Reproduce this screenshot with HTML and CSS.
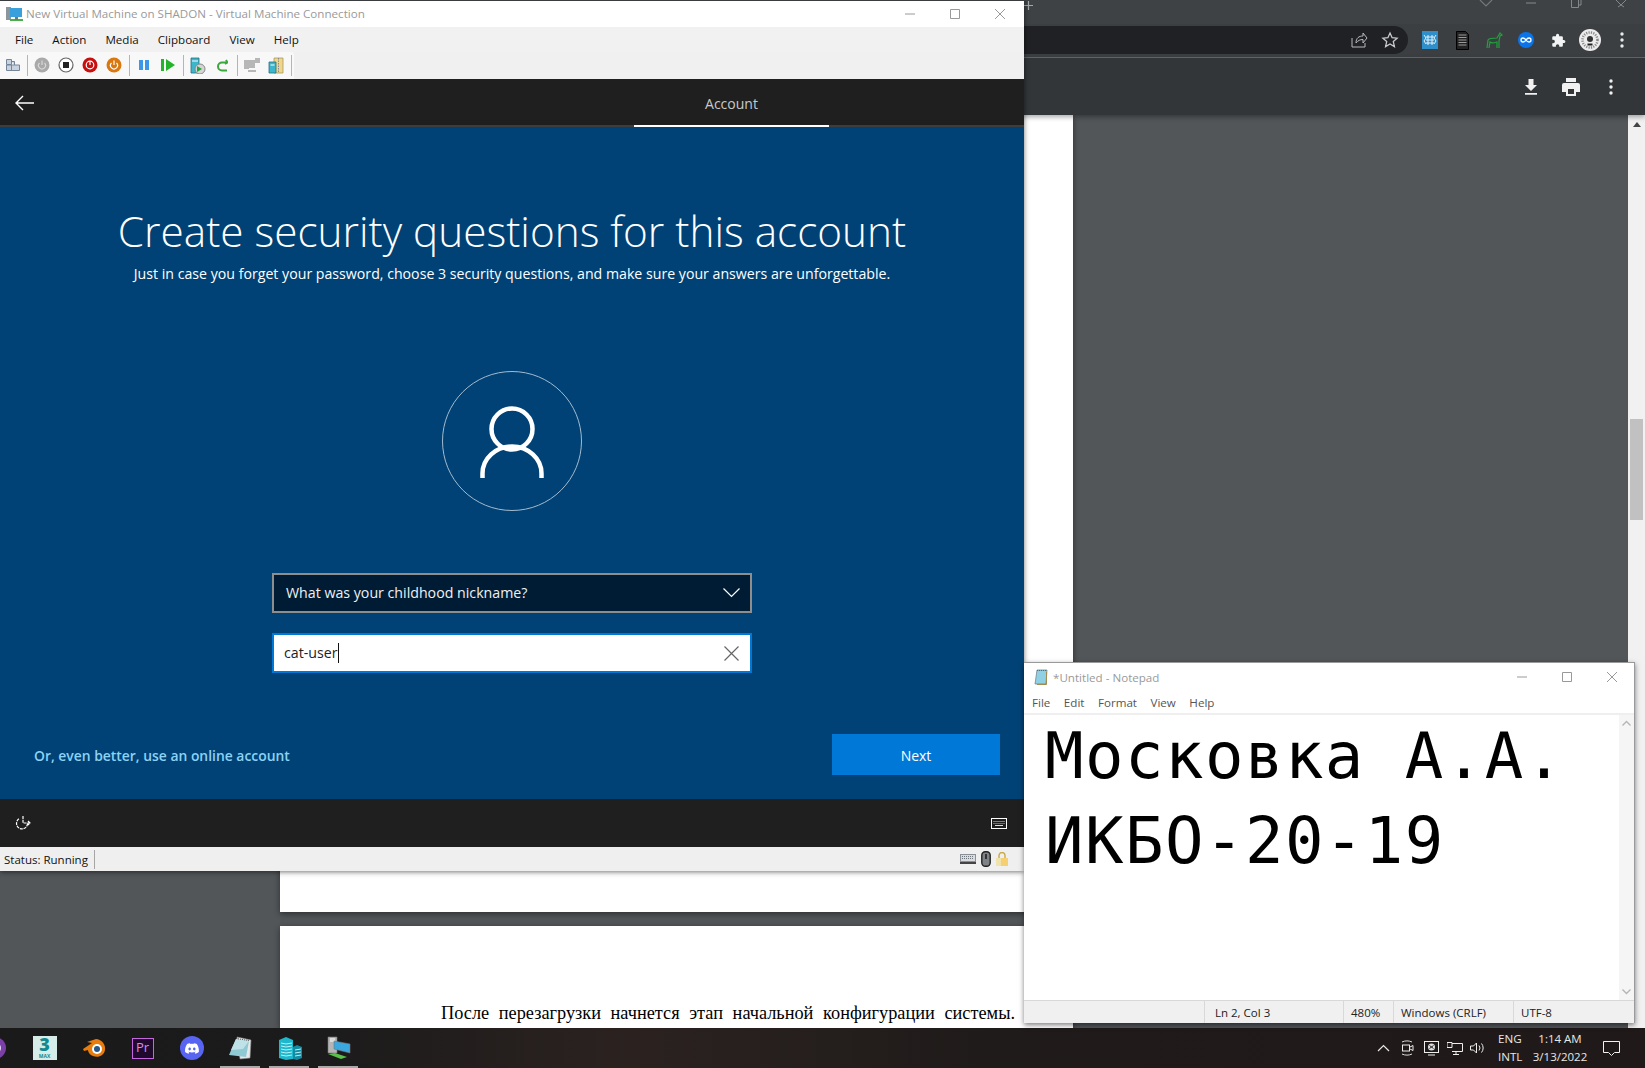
FILE: index.html
```html
<!DOCTYPE html>
<html lang="en">
<head>
<meta charset="utf-8">
<title>Virtual Machine Connection</title>
<link rel="stylesheet" href="styles.css">
</head>
<body>
<div class="desktop">

  <section class="chrome">
    <div class="chrome-tabs">
      <svg class="tab-plus" width="9" height="9" viewBox="0 0 9 9"><path d="M4.500 0v9M0 4.500h9" stroke="#a6a9ab" stroke-width="1.200"/></svg>
      <div class="chrome-caption">
        <svg width="14" height="8" viewBox="0 0 14 8"><path d="M1 0l6 6 6-6" fill="none" stroke="#74787b" stroke-width="1.200"/></svg>
        <svg width="14" height="8" viewBox="0 0 14 8"><path d="M2 3h10" stroke="#85898c" stroke-width="1"/></svg>
        <svg width="14" height="8" viewBox="0 0 14 8"><path d="M2.500 0v7.500h7V0M9.500 5H12V0" fill="none" stroke="#85898c" stroke-width="1"/></svg>
        <svg width="14" height="8" viewBox="0 0 14 8"><path d="M2 0l5 5 5-5M4 7l3-2 3 2" fill="none" stroke="#85898c" stroke-width="1"/></svg>
      </div>
    </div>
    <div class="chrome-bar">
      <div class="omnibox">
        <svg class="omni-icon" width="18" height="18" viewBox="0 0 18 18"><path d="M2 7v9h13v-4M6 12c0-5 3-7 7-7V2l4 5-4 5V8.500c-3 0-5 1-7 3.500z" fill="none" stroke="#b9bbbd" stroke-width="1"/></svg>
        <svg class="omni-icon" width="18" height="18" viewBox="0 0 18 18"><path d="M9 2l2.100 4.700 5 .5-3.800 3.400 1.100 5L9 13l-4.400 2.600 1.100-5L1.900 7.200l5-.5z" fill="none" stroke="#c9cbce" stroke-width="1.300"/></svg>
      </div>
      <div class="ext-row">
        <svg width="16" height="18" viewBox="0 0 16 18"><rect width="16" height="18" fill="#2f8fcb"/><path d="M2 4l2 3-2 3 2 3M6 4v10M10 4v10M14 4l-2 3 2 3-2 3M4 6h8M4 9h8M4 12h8" stroke="#e4f1fa" fill="none" stroke-width="1"/></svg>
        <svg width="13" height="19" viewBox="0 0 13 19"><path d="M.5.5h9l3 3v15H.5z" fill="#222" stroke="#000"/><path d="M2.500 4h8M2.500 6.500h8M2.500 9h8M2.500 11.500h8M2.500 14h8" stroke="#9a9a9a" stroke-width="1"/></svg>
        <svg width="17" height="18" viewBox="0 0 17 18"><path d="M1 17l1-8c1-2 6-2 9-2l3-5 2 2-2 1-1 5v7M11 17V11C8 12 5 12 4 11l-1 6" fill="none" stroke="#1fa33b" stroke-width="1.200"/></svg>
        <svg width="16" height="16" viewBox="0 0 16 16"><circle cx="8" cy="8" r="8" fill="#0a74ea"/><path d="M8 8c-1-1.500-2-2-3-2a2 2 0 0 0 0 4c1 0 2-.5 3-2s2-2 3-2a2 2 0 0 1 0 4c-1 0-2-.5-3-2z" fill="none" stroke="#fff" stroke-width="1.300"/></svg>
        <svg width="15" height="15" viewBox="0 0 24 24"><path d="M20.500 11H19V7a2 2 0 0 0-2-2h-4V3.500a2.500 2.500 0 0 0-5 0V5H4a2 2 0 0 0-2 2v3.800h1.500a2.700 2.700 0 0 1 0 5.400H2V20a2 2 0 0 0 2 2h3.800v-1.500a2.700 2.700 0 0 1 5.400 0V22H17a2 2 0 0 0 2-2v-4h1.500a2.500 2.500 0 0 0 0-5z" fill="#f1f3f4"/></svg>
        <svg width="22" height="22" viewBox="0 0 22 22"><circle cx="11" cy="11" r="11" fill="#ececec"/><circle cx="11" cy="11" r="7.500" fill="none" stroke="#888" stroke-width="2.500" stroke-dasharray="1.200 1.200"/><circle cx="11" cy="10" r="3" fill="#333"/><path d="M8.500 15.500h5" stroke="#222" stroke-width="2"/></svg>
        <svg width="4" height="16" viewBox="0 0 4 16"><circle cx="2" cy="2" r="1.700" fill="#e8eaed"/><circle cx="2" cy="8" r="1.700" fill="#e8eaed"/><circle cx="2" cy="14" r="1.700" fill="#e8eaed"/></svg>
      </div>
    </div>
    <div class="pdf-bar">
      <svg width="14" height="16" viewBox="0 0 14 16"><path d="M4.500 0h5v6H13L7 12 1 6h3.500zM1 14h12v1.800H1z" fill="#f1f1f1"/></svg>
      <svg width="18" height="18" viewBox="0 0 18 18"><path d="M4 0h10v4H4zM2 5h14a2 2 0 0 1 2 2v7h-4v4H4v-4H0V7a2 2 0 0 1 2-2z" fill="#f1f1f1"/><path d="M6 11h6v5H6z" fill="#323639"/></svg>
      <svg width="4" height="16" viewBox="0 0 4 16"><circle cx="2" cy="2" r="1.700" fill="#f1f1f1"/><circle cx="2" cy="8" r="1.700" fill="#f1f1f1"/><circle cx="2" cy="14" r="1.700" fill="#f1f1f1"/></svg>
    </div>
    <div class="pdf-view">
      <div class="pages">
        <div class="page page-first"></div>
        <div class="page page-second">
          <p class="page-line">После перезагрузки начнется этап начальной конфигурации системы.</p>
        </div>
      </div>
      <div class="scroll">
        <svg width="8" height="5" viewBox="0 0 8 5"><path d="M4 0l4 5H0z" fill="#444"/></svg>
        <div class="scroll-thumb"></div>
      </div>
    </div>
  </section>

  <section class="vm">
    <header class="win-title">
      <svg width="17" height="17" viewBox="0 0 17 17"><rect y="1" width="5" height="13" fill="#8d959c"/><rect x="4" y="2" width="12" height="9" fill="#3aa0dc"/><path d="M4 13h13v2H4z" fill="#48b04a"/><path d="M9 11h3v3H9z" fill="#777"/></svg>
      <span class="win-name">New Virtual Machine on SHADON - Virtual Machine Connection</span>
      <div class="caption">
        <svg width="12" height="12" viewBox="0 0 12 12"><path d="M1 6h10" stroke="#999" stroke-width="1"/></svg>
        <svg width="12" height="12" viewBox="0 0 12 12"><path d="M1.500 1.500h9v9h-9z" fill="none" stroke="#999" stroke-width="1"/></svg>
        <svg width="12" height="12" viewBox="0 0 12 12"><path d="M1 1l10 10M11 1L1 11" stroke="#999" stroke-width="1"/></svg>
      </div>
    </header>
    <nav class="menu vm-menu">
      <span>File</span><span>Action</span><span>Media</span><span>Clipboard</span><span>View</span><span>Help</span>
    </nav>
    <div class="toolbar">
      <div class="tb-group">
        <span class="tb tb-first"><svg width="16" height="14" viewBox="0 0 16 14"><path d="M1.500 1.500h5v5h-5zM1.500 7h13v5.500h-13zM6.500 7v5.500M6.500 3.500h3V7" fill="#c9d3e0" stroke="#76869a"/></svg></span>
        <i class="tb-sep"></i>
        <span class="tb"><svg width="16" height="16" viewBox="0 0 16 16"><circle cx="8" cy="8" r="7.500" fill="#a9a9a9"/><path d="M5.500 6a3.500 3.500 0 1 0 5 0M8 3.500V8" fill="none" stroke="#d8d8d8" stroke-width="1.200"/></svg></span>
        <span class="tb"><svg width="16" height="16" viewBox="0 0 16 16"><circle cx="8" cy="8" r="7" fill="#fff" stroke="#666" stroke-width="1.200"/><rect x="5" y="5" width="6" height="6" fill="#222"/></svg></span>
        <span class="tb"><svg width="16" height="16" viewBox="0 0 16 16"><circle cx="8" cy="8" r="7.500" fill="#c80f0f"/><circle cx="8" cy="8" r="3.800" fill="none" stroke="#fff" stroke-width="1.200"/><path d="M8 4v4" stroke="#fff" stroke-width="1.200"/></svg></span>
        <span class="tb"><svg width="16" height="16" viewBox="0 0 16 16"><circle cx="8" cy="8" r="7.500" fill="#d9780f"/><path d="M5.500 6a3.500 3.500 0 1 0 5 0M8 3.500V8" fill="none" stroke="#fff" stroke-width="1.200"/></svg></span>
        <i class="tb-sep"></i>
        <span class="tb"><svg width="12" height="12" viewBox="0 0 12 12"><path d="M1 1h4v10H1zM7 1h4v10H7z" fill="#3c97e8"/></svg></span>
        <span class="tb"><svg width="14" height="12" viewBox="0 0 14 12"><path d="M0 0h3v12H0zM5 0l9 6-9 6z" fill="#22b52b"/></svg></span>
        <i class="tb-sep"></i>
        <span class="tb"><svg width="16" height="17" viewBox="0 0 16 17"><path d="M1 1h8v15H1z" fill="#3db5cc" stroke="#28707f" stroke-width=".800"/><path d="M2 4h6" stroke="#fff"/><circle cx="10" cy="12" r="5" fill="#d5d5d5" stroke="#888"/><path d="M7 9l5 3-5 3z" fill="#21a63a"/></svg></span>
        <span class="tb"><svg width="12" height="13" viewBox="0 0 12 13"><path d="M10 1l1.500 2.500L9 5M11 3.500H6a3.500 3.500 0 0 0 0 8h5" fill="none" stroke="#3aa83a" stroke-width="2"/></svg></span>
        <i class="tb-sep"></i>
        <span class="tb"><svg width="16" height="15" viewBox="0 0 16 15"><path d="M0 2h5v9H0zM5 2h6v8H5zM11 0h5v5h-5zM4 12h8v2H4z" fill="#b7b7b7"/></svg></span>
        <span class="tb"><svg width="16" height="17" viewBox="0 0 16 17"><path d="M6 1h9v15H6z" fill="#efd68a" stroke="#a99960" stroke-width=".800"/><path d="M10.500 1v15" stroke="#888" stroke-dasharray="1.500 1"/><path d="M1 5h7v11H1z" fill="#3db5cc" stroke="#28707f" stroke-width=".800"/><path d="M2.500 8h4" stroke="#fff"/></svg></span>
        <i class="tb-sep"></i>
      </div>
    </div>

    <div class="oobe-head">
      <button class="oobe-back" type="button" aria-label="Back"><svg width="19" height="16" viewBox="0 0 19 16"><path d="M8 1L1 8l7 7M1 8h18" fill="none" stroke="#fff" stroke-width="1.400"/></svg></button>
      <div class="oobe-tab">Account</div>
    </div>

    <main class="oobe">
      <h1 class="oobe-title">Create security questions for this account</h1>
      <p class="oobe-sub">Just in case you forget your password, choose 3 security questions, and make sure your answers are unforgettable.</p>
      <div class="avatar">
        <svg width="64" height="72" viewBox="0 0 64 72"><circle cx="32" cy="23" r="20.500" fill="none" stroke="#fff" stroke-width="4.500"/><path d="M2.500 72v-4.500a29.500 27 0 0 1 59 0V72" fill="none" stroke="#fff" stroke-width="4.500"/></svg>
      </div>
      <div class="select">
        <span class="select-text">What was your childhood nickname?</span>
        <svg width="17" height="10" viewBox="0 0 17 10"><path d="M.500.500l8 8 8-8" fill="none" stroke="#fff" stroke-width="1.200"/></svg>
      </div>
      <div class="field">
        <span class="field-value">cat-user</span>
        <svg width="15" height="15" viewBox="0 0 15 15"><path d="M.500.500l14 14M14.500.500l-14 14" stroke="#666" stroke-width="1.200"/></svg>
      </div>
      <div class="oobe-actions">
        <a class="oobe-link">Or, even better, use an online account</a>
        <button class="oobe-next" type="button">Next</button>
      </div>
    </main>

    <div class="oobe-foot">
      <svg width="16" height="16" viewBox="0 0 16 16"><path d="M12.500 8.500a5.500 5.500 0 1 1-8-5M8 1v7h7M13 6l2 2-2 2" fill="none" stroke="#fff" stroke-width="1.200" stroke-dasharray="3 .8"/></svg>
      <svg width="16" height="11" viewBox="0 0 16 11"><rect x=".5" y=".5" width="15" height="10" fill="#1f1f1f" stroke="#fff"/><path d="M2.500 3.500h11" stroke="#ddd" stroke-dasharray="1 1"/><path d="M2.500 5.500h11" stroke="#e6a0e6" stroke-dasharray="1 1"/><path d="M4 7.500h8" stroke="#ddd"/></svg>
    </div>

    <footer class="vm-status">
      <span class="vm-status-text">Status: Running</span>
      <div class="vm-status-icons">
        <svg width="16" height="10" viewBox="0 0 16 10"><rect x=".5" y=".5" width="15" height="7" fill="#d8dce0" stroke="#8a9097"/><path d="M2 2.500h12M2 4.500h12" stroke="#70757c" stroke-dasharray="1 1"/><path d="M0 9h16" stroke="#444" stroke-width="2"/></svg>
        <svg width="10" height="16" viewBox="0 0 10 16"><rect x=".8" y=".8" width="8.400" height="14.400" rx="3.500" fill="#7e8388" stroke="#222" stroke-width="1.400"/><path d="M5 3v5" stroke="#333" stroke-width="2"/></svg>
        <svg width="12" height="14" viewBox="0 0 12 14"><path d="M3 6V3.500a3 3 0 0 1 6 0V6" fill="none" stroke="#c9a94a" stroke-width="1.400"/><rect y="6" width="12" height="8" fill="#f5cf70"/><rect width="5" height="8" y="6" fill="#f0e2ad"/></svg>
      </div>
    </footer>
  </section>

  <section class="notepad">
    <header class="win-title np-title">
      <svg width="16" height="16" viewBox="0 0 16 16"><path d="M3 1h10l-1 14H1z" fill="#8fd0e4" stroke="#6b7a80" stroke-width=".700"/><path d="M12.500 3v12.500H3" fill="none" stroke="#a28b50"/><path d="M3 1.500h10" stroke="#666" stroke-dasharray="1 1"/></svg>
      <span class="win-name np-name">*Untitled - Notepad</span>
      <div class="caption np-caption">
        <svg width="12" height="12" viewBox="0 0 12 12"><path d="M1 6h10" stroke="#999" stroke-width="1"/></svg>
        <svg width="12" height="12" viewBox="0 0 12 12"><path d="M1.500 1.500h9v9h-9z" fill="none" stroke="#999" stroke-width="1"/></svg>
        <svg width="12" height="12" viewBox="0 0 12 12"><path d="M1 1l10 10M11 1L1 11" stroke="#999" stroke-width="1"/></svg>
      </div>
    </header>
    <nav class="menu np-menu">
      <span>File</span><span>Edit</span><span>Format</span><span>View</span><span>Help</span>
    </nav>
    <div class="np-body">
      <div class="np-text">Московка А.А.<br>ИКБО-20-19</div>
      <div class="np-scroll">
        <svg width="9" height="6" viewBox="0 0 9 6"><path d="M.5 5.500l4-4 4 4" fill="none" stroke="#b5b5b5" stroke-width="1.400"/></svg>
        <svg width="9" height="6" viewBox="0 0 9 6"><path d="M.5.500l4 4 4-4" fill="none" stroke="#b5b5b5" stroke-width="1.400"/></svg>
      </div>
    </div>
    <footer class="np-status">
      <span class="cell cell-pad"></span>
      <span class="cell cell-pos">Ln 2, Col 3</span>
      <span class="cell cell-zoom">480%</span>
      <span class="cell cell-eol">Windows (CRLF)</span>
      <span class="cell cell-enc">UTF-8</span>
    </footer>
  </section>

  <footer class="taskbar">
    <div class="task-icons">
      <span class="task task-cut"><svg width="7" height="24" viewBox="0 0 7 24"><circle cx="-5" cy="12" r="11" fill="#7b3fa8"/><circle cx="-5" cy="12" r="5" fill="none" stroke="#e6d5f0" stroke-width="2"/></svg></span>
      <span class="task"><span class="max-logo"><b>3</b><small>MAX</small></span></span>
      <span class="task"><svg width="24" height="20" viewBox="0 0 24 20"><path d="M1 11l9-6-5-1 9-3c5 0 10 5 9 11s-7 8-12 6-5-6-5-6l-4 1z" fill="#e87d0d"/><circle cx="15" cy="11" r="5" fill="#fff"/><circle cx="15" cy="11" r="3" fill="#265787"/></svg></span>
      <span class="task"><span class="pr-logo">Pr</span></span>
      <span class="task"><svg width="24" height="24" viewBox="0 0 24 24"><circle cx="12" cy="12" r="12" fill="#5865f2"/><g transform="translate(5 5.500) scale(.58)"><path fill="#fff" d="M20.317 4.37a19.791 19.791 0 0 0-4.885-1.515.074.074 0 0 0-.079.037c-.21.375-.444.864-.608 1.25a18.27 18.27 0 0 0-5.487 0 12.64 12.64 0 0 0-.617-1.25.077.077 0 0 0-.079-.037A19.736 19.736 0 0 0 3.677 4.37a.07.07 0 0 0-.032.027C.533 9.046-.32 13.58.099 18.057a.082.082 0 0 0 .031.057 19.9 19.9 0 0 0 5.993 3.03.078.078 0 0 0 .084-.028c.462-.63.874-1.295 1.226-1.994a.076.076 0 0 0-.041-.106 13.107 13.107 0 0 1-1.872-.892.077.077 0 0 1-.008-.128 10.2 10.2 0 0 0 .372-.292.074.074 0 0 1 .077-.01c3.928 1.793 8.18 1.793 12.062 0a.074.074 0 0 1 .078.01c.12.098.246.198.373.292a.077.077 0 0 1-.006.127 12.299 12.299 0 0 1-1.873.892.077.077 0 0 0-.041.107c.36.698.772 1.362 1.225 1.993a.076.076 0 0 0 .084.028 19.839 19.839 0 0 0 6.002-3.03.077.077 0 0 0 .032-.054c.5-5.177-.838-9.674-3.549-13.66a.061.061 0 0 0-.031-.03zM8.020 15.330c-1.183 0-2.157-1.085-2.157-2.419 0-1.333.956-2.419 2.157-2.419 1.21 0 2.176 1.096 2.157 2.420 0 1.333-.956 2.418-2.157 2.418zm7.975 0c-1.183 0-2.157-1.085-2.157-2.419 0-1.333.955-2.419 2.157-2.419 1.21 0 2.176 1.096 2.157 2.420 0 1.333-.946 2.418-2.157 2.418z"/></g></svg></span>
      <span class="task task-open"><svg width="24" height="24" viewBox="0 0 24 24"><path d="M8 1l14 3-1 18-10 1z" fill="#e8e8e8" stroke="#8a8a8a" stroke-width=".6"/><path d="M7 3l13 2-3 16L0 19z" fill="#8fc9d4"/><path d="M7 3l13 2-6 8L2 14z" fill="#bfe2e8"/><path d="M7 2.500l13 2" stroke="#555" stroke-dasharray="1 1"/></svg></span>
      <span class="task task-open"><svg width="24" height="24" viewBox="0 0 24 24"><path d="M1 4l7-3 7 3v19l-7 1-7-2z" fill="#1fb7cc"/><path d="M15 11l4-2 5 2v11l-5 2-4-1z" fill="#128ba3"/><path d="M3 7l5 1M3 10l5 1M3 13l5 1M3 16l5 1M3 19l5 1M8 8l6-1M8 11l6-1M8 14l6-1M8 17l6-1M8 20l6-1M17 14l6-1M17 17l6-1M17 20l6-1" stroke="#b7f2fa" fill="none"/></svg></span>
      <span class="task task-open"><svg width="24" height="24" viewBox="0 0 24 24"><path d="M1 1h9v16H1z" fill="#b5b5b5" stroke="#777" stroke-width=".6"/><path d="M3 3h5M3 5h5" stroke="#fff"/><path d="M7 5l16 3v9L7 13z" fill="#3ba9e0" stroke="#777" stroke-width=".6"/><path d="M1 18l7-1 12 4-6 2z" fill="#59c04a"/></svg></span>
    </div>
    <div class="tray">
      <div class="tray-icons">
        <svg width="13" height="8" viewBox="0 0 13 8"><path d="M1 7l5.500-5.500L12 7" fill="none" stroke="#e8e8e8" stroke-width="1.200"/></svg>
        <svg width="13" height="16" viewBox="0 0 13 16"><path d="M1 2c3-1.500 7-1.500 10 0M1 14c3 1.500 7 1.500 10 0" fill="none" stroke="#ddd"/><rect x="1.500" y="5" width="7" height="6" fill="none" stroke="#eee"/><path d="M9 7l3-1.500v5L9 9" fill="none" stroke="#eee"/></svg>
        <svg width="15" height="15" viewBox="0 0 15 15"><rect x=".5" y=".5" width="14" height="11" fill="none" stroke="#eee"/><circle cx="7.500" cy="6" r="3.500" fill="#ddd"/><path d="M4 14h7" stroke="#eee"/><path d="M5.500 4.500l4 3M9.500 4.500l-4 3" stroke="#222"/></svg>
        <svg width="16" height="13" viewBox="0 0 16 13"><path d="M5 1.500h10.500v8H5M0 .5h5v5H0zM9 9.500v3M6 12.500h6" fill="none" stroke="#eee"/></svg>
        <svg width="16" height="12" viewBox="0 0 16 12"><path d="M.5 4v4h3l3 3V1l-3 3zM9 3.500a4 4 0 0 1 0 5M11.500 1.500a7 7 0 0 1 0 9" fill="none" stroke="#eee"/></svg>
      </div>
      <div class="lang"><span>ENG</span><span>INTL</span></div>
      <div class="clock"><span>1:14 AM</span><span>3/13/2022</span></div>
      <svg class="notif" width="17" height="15" viewBox="0 0 17 15"><path d="M.5.5h16v11h-5l-3 3-3-3h-5z" fill="none" stroke="#f2f2f2"/></svg>
    </div>
  </footer>
</div>
</body>
</html>
```

FILE: styles.css
```css
* { box-sizing: border-box; }
html, body { margin: 0; padding: 0; }
body { font-family: "Open Sans", "Noto Sans", sans-serif; background: #1b1a1a; }
.desktop { position: relative; width: 1645px; height: 1068px; overflow: hidden; background: #1b1a1a; }

/* Chrome window */
.chrome { position: absolute; left: 0; top: 0; width: 1645px; height: 1028px; display: flex; flex-direction: column; background: #525659; }
.chrome-tabs { height: 24px; flex: none; background: #3e4245; padding-left: 1024px; display: flex; justify-content: space-between; }
.tab-plus { margin-top: 1px; }
.chrome-caption { display: flex; gap: 31px; padding-right: 17px; align-items: flex-start; }
.chrome-bar { height: 34px; flex: none; background: #3b3f42; border-bottom: 1px solid #66696b; display: flex; padding: 2px 0 0 1000px; }
.omnibox { width: 408px; height: 28px; background: #202124; border-radius: 0 14px 14px 0; display: flex; justify-content: flex-end; align-items: center; gap: 13px; padding-right: 9px; flex: none; }
.ext-row { display: grid; grid-template-columns: repeat(7, 32px); align-items: center; justify-items: center; height: 28px; margin-left: 6px; }
.pdf-bar { height: 57px; flex: none; background: #323639; box-shadow: 0 2px 5px rgba(0,0,0,.35); position: relative; z-index: 1; display: grid; grid-template-columns: repeat(3, 40px); align-items: center; justify-items: center; justify-content: end; padding-right: 14px; }
.pdf-view { flex: 1; display: flex; min-height: 0; justify-content: space-between; }
.pages { margin-left: 280px; width: 793px; display: flex; flex-direction: column; gap: 14px; }
.page { background: #fff; width: 793px; box-shadow: 0 2px 6px rgba(0,0,0,.45); flex: none; }
.page-first { height: 797px; }
.page-second { height: 102px; padding: 75px 58px 0 161px; }
.page-line { margin: 0; font: 18.300px/24px "Liberation Serif", "Noto Sans CJK SC", serif; color: #000; text-align: justify; text-align-last: justify; }
.scroll { width: 17px; background: #f1f1f1; display: flex; flex-direction: column; align-items: center; padding-top: 7px; }
.scroll-thumb { width: 13px; height: 101px; margin-top: 292px; background: #c1c1c1; }

/* Shared window chrome */
.win-title { height: 26px; display: flex; align-items: center; background: #fff; padding-left: 6px; flex: none; }
.win-name { color: #9a9a9a; font-size: 11.600px; margin-left: 3px; padding-bottom: 1px; }
.caption { margin-left: auto; display: flex; gap: 33px; padding-right: 18px; }
.menu { display: flex; align-items: center; flex: none; color: #111; font-size: 11.600px; }

/* VM window */
.vm { position: absolute; left: 0; top: 0; width: 1024px; height: 871px; display: flex; flex-direction: column; background: #f0f0f0; border-top: 1px solid #3a3d40; box-shadow: 0 1px 5px rgba(0,0,0,.55); z-index: 2; }
.vm-menu { height: 25px; background: #f1f1f1; padding-left: 15px; gap: 19px; }
.toolbar { height: 27px; display: flex; background: #f0f0f0; flex: none; }
.tb-group { display: flex; align-items: center; background: #f8f8f8; padding: 0 0 1px 2px; border-radius: 0 3px 0 0; }
.tb { width: 24px; height: 24px; display: flex; align-items: center; justify-content: center; flex: none; }
.tb-first { width: 22px; }
.tb-sep { width: 1px; height: 21px; background: #b5b5b5; margin: 0 2px 0 3px; flex: none; }
.oobe-head { height: 48px; flex: none; background: #1f1f1f; border-bottom: 2px solid #3d3d3d; display: flex; align-items: center; position: relative; padding: 1px 0 0 15px; }
.oobe-back { background: none; border: 0; padding: 0; display: flex; }
.oobe-tab { position: absolute; left: 634px; top: 0; width: 195px; height: 48px; border-bottom: 2px solid #fff; color: #c9c9c9; font-size: 14px; display: flex; align-items: center; justify-content: center; padding-top: 3px; }
.oobe { flex: 1; background: #004275; display: flex; flex-direction: column; align-items: center; color: #fff; min-height: 0; }
.oobe-title { margin: 78px 0 0; font-size: 42.300px; font-weight: 300; line-height: 52px; }
.oobe-sub { margin: 7px 0 0; font-size: 14.160px; line-height: 20px; }
.avatar { width: 140px; height: 140px; border: 1px solid #a4bbcf; border-radius: 50%; margin-top: 87px; display: flex; align-items: center; justify-content: center; padding-top: 1px; flex: none; }
.select { width: 480px; height: 40px; margin-top: 62px; background: #001c34; border: 2px solid #8e8e8e; display: flex; align-items: center; justify-content: space-between; padding: 0 10px 0 12px; font-size: 14.200px; color: #eef1f4; flex: none; }
.select-text { padding-bottom: 2px; }
.field { width: 480px; height: 40px; margin-top: 20px; background: #fff; border: 2px solid #0078d7; display: flex; align-items: center; justify-content: space-between; padding: 0 11px 0 10px; font-size: 14.200px; color: #222; flex: none; }
.field-value { border-right: 1px solid #111; line-height: 20px; }
.oobe-actions { width: 1024px; display: flex; align-items: center; justify-content: space-between; margin-top: 61px; padding: 0 24px 0 34px; }
.oobe-link { color: #8cd2f5; font-size: 13.900px; font-weight: 600; padding-top: 1px; }
.oobe-next { width: 168px; height: 41px; background: #0078d7; border: 0; padding: 1px 0 0; color: #fff; font: 14px "Open Sans", sans-serif; }
.oobe-foot { height: 48px; flex: none; background: #1f1f1f; display: flex; align-items: center; justify-content: space-between; padding: 0 17px 0 15px; }
.vm-status { height: 24px; flex: none; background: #efefef; display: flex; align-items: center; justify-content: space-between; padding: 0 16px 0 4px; font-size: 11.500px; color: #111; }
.vm-status-text { border-right: 1px solid #a5a5a5; padding: 1px 6px 0 0; line-height: 18px; }
.vm-status-icons { display: flex; align-items: center; gap: 5px; }

/* Notepad */
.notepad { position: absolute; left: 1024px; top: 662px; width: 611px; height: 361px; background: #fff; border: 1px solid #9a9a9a; border-left: 0; border-bottom: 0; box-shadow: 0 2px 5px rgba(0,0,0,.5); display: flex; flex-direction: column; z-index: 3; }
.np-title { height: 28px; padding-left: 10px; }
.np-name { padding: 1px 0 0; }
.np-caption { gap: 33px; padding-right: 16px; }
.np-menu { height: 24px; padding-left: 8px; gap: 13.500px; color: #555; background: #fff; border-bottom: 2px solid #efefef; }
.np-body { flex: 1; display: flex; min-height: 0; }
.np-text { flex: 1; margin-top: -1px; padding-left: 21px; font: 64px/85px "DejaVu Sans Mono", monospace; letter-spacing: 1.450px; color: #000; white-space: nowrap; }
.np-scroll { width: 15px; flex: none; background: #f5f5f5; display: flex; flex-direction: column; align-items: center; justify-content: space-between; padding: 5px 0; }
.np-status { height: 23px; flex: none; background: #f0f0f0; border-top: 1px solid #d8d8d8; display: flex; font-size: 11.500px; color: #222; }
.cell { display: flex; align-items: center; border-right: 1px solid #d8d8d8; padding-left: 10px; }
.cell-pad { width: 181px; }
.cell-pos { width: 139px; }
.cell-zoom { width: 50px; padding-left: 7px; }
.cell-eol { width: 120px; padding-left: 7px; }
.cell-enc { flex: 1; border: 0; padding-left: 7px; }

/* Taskbar */
.taskbar { position: absolute; left: 0; bottom: 0; width: 1645px; height: 40px; background: linear-gradient(90deg, #1a1a1a 0%, #1c1b1b 20%, #2b2220 38%, #1f1b1a 60%, #1f1a19 100%); display: flex; justify-content: space-between; color: #e8e8e8; }
.task-icons { display: flex; margin-left: -29px; }
.task { width: 49px; height: 40px; display: flex; align-items: center; justify-content: center; position: relative; flex: none; }
.task-cut { justify-content: flex-start; padding-left: 29px; }
.task-open::after { content: ""; position: absolute; left: 4px; right: 5px; bottom: 0; height: 2px; background: #a9a9a9; }
.max-logo { width: 24px; height: 24px; background: #d6ece8; color: #13898f; font: 700 18px/17px "Open Sans", sans-serif; display: flex; flex-direction: column; align-items: center; }
.max-logo b { height: 17px; }
.max-logo small { font-size: 5px; line-height: 6px; }
.pr-logo { width: 22px; height: 21px; background: #1f0a2e; border: 1.500px solid #c566e0; color: #d88af0; font: 13px/17px "Open Sans", sans-serif; text-align: center; }
.tray { display: flex; align-items: center; padding-right: 25px; }
.tray-icons { display: grid; grid-template-columns: repeat(5, 23.600px); justify-items: center; align-items: center; margin-right: 8px; }
.lang { display: flex; flex-direction: column; font-size: 11.600px; line-height: 18px; width: 31px; align-items: flex-start; }
.clock { display: flex; flex-direction: column; align-items: center; font-size: 11.500px; line-height: 18px; width: 62px; }
.notif { margin-left: 12px; flex: none; }
```
